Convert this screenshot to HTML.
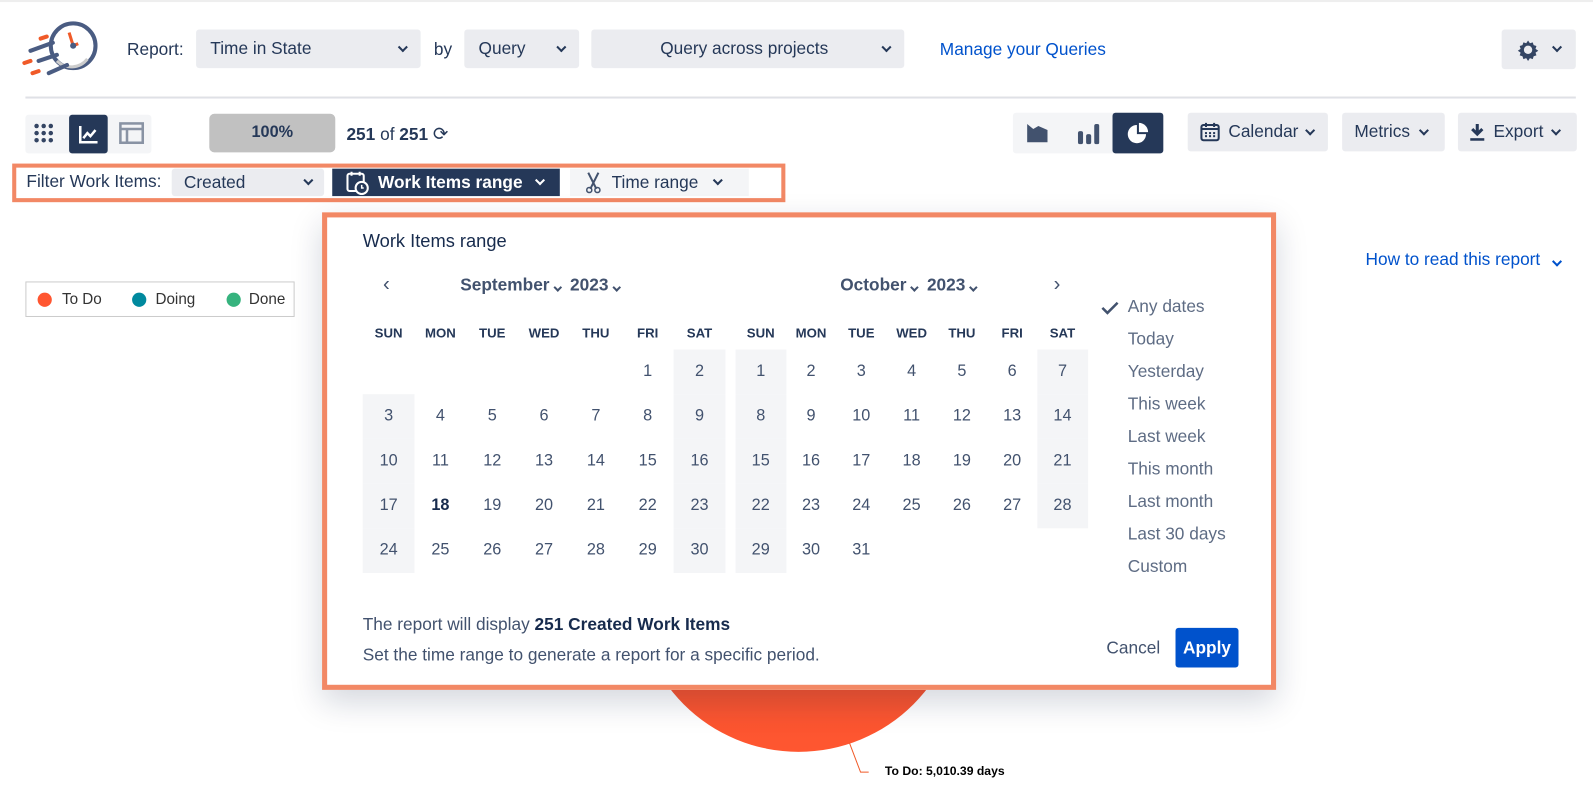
<!DOCTYPE html>
<html><head><meta charset="utf-8"><style>
*{box-sizing:border-box;margin:0;padding:0}
body{width:1593px;height:794px;background:#fff;font-family:"Liberation Sans",Arial,sans-serif;color:#253858;position:relative;overflow:hidden}
#w{position:absolute;left:0;top:0;width:1568px;height:782px;transform:scale(1.016);transform-origin:0 0}
.a{position:absolute}
.sel{position:absolute;background:#ebecf0;border-radius:3px;font-size:17px;color:#253858;display:flex;align-items:center}
.chev{display:inline-block;width:7px;height:7px;border-right:2px solid #253858;border-bottom:2px solid #253858;transform:rotate(45deg);margin-top:-4px}
.grid{position:absolute;display:grid;grid-template-rows:44px 44px 44px 44px 44px;font-size:16px;color:#42526e}
.grid div{display:flex;align-items:center;justify-content:center}
.grid .w{background:#f4f5f7}
.hdr{position:absolute;display:grid;font-size:13px;font-weight:bold;color:#253858}
.hdr div{text-align:center}
.opt{position:absolute;left:1110px;font-size:17px;color:#5e6c84}
</style></head><body><div id="w">
<div class="a" style="left:0;top:0;width:1593px;height:2px;background:#eee"></div>
<svg class="a" style="left:20px;top:16px" width="84" height="64" viewBox="0 0 84 64">
<circle cx="52" cy="29" r="22" fill="none" stroke="#4a5c82" stroke-width="4"/>
<path d="M36 44 A20 20 0 0 0 66 42" fill="none" stroke="#ccc" stroke-width="3"/>
<line x1="52" y1="29" x2="48" y2="16" stroke="#f05a28" stroke-width="3"/>
<line x1="52" y1="29" x2="57" y2="27" stroke="#f05a28" stroke-width="3"/>
<circle cx="52" cy="29" r="3" fill="#4a5c82"/>
<path d="M10 34 L32 26 M18 44 L36 38 M28 56 L46 48" stroke="#4a5c82" stroke-width="4" stroke-linecap="round"/>
<path d="M20 22 L26 20 M4 46 L10 44 M12 56 L18 54" stroke="#f05a28" stroke-width="4" stroke-linecap="round"/>
</svg>
<div class="a" style="left:125px;top:39px;font-size:17px">Report:</div>
<div class="sel" style="left:193px;top:29px;width:221px;height:38px;padding:0 14px;justify-content:space-between"><span>Time in State</span><span class="chev"></span></div>
<div class="a" style="left:427px;top:39px;font-size:17px">by</div>
<div class="sel" style="left:457px;top:29px;width:113px;height:38px;padding:0 14px;justify-content:space-between"><span>Query</span><span class="chev"></span></div>
<div class="sel" style="left:582px;top:29px;width:308px;height:38px;padding:0 14px"><span style="flex:1;text-align:center">Query across projects</span><span class="chev"></span></div>
<div class="a" style="left:925px;top:39px;font-size:17px;color:#0052cc">Manage your Queries</div>
<div class="sel" style="left:1478px;top:29px;width:73px;height:39px;justify-content:center;gap:14px">
<svg width="22" height="22" viewBox="0 0 24 24"><path d="M12 2l2 3 3-1 1 3 3 1-1 3 3 2-3 2 1 3-3 1-1 3-3-1-2 3-2-3-3 1-1-3-3-1 1-3-3-2 3-2-1-3 3-1 1-3 3 1z" fill="#344563"/><circle cx="12" cy="12" r="4.5" fill="#ebecf0"/></svg><span class="chev"></span></div>
<div class="a" style="left:25px;top:95px;width:1526px;height:2px;background:#dfe1e6"></div>
<div class="a" style="left:25px;top:113px;width:124px;height:38px;background:#f4f5f7;border-radius:3px"></div>
<svg class="a" style="left:33px;top:121px" width="20" height="20"><g fill="#344563"><circle cx="3" cy="3" r="2.2"/><circle cx="10" cy="3" r="2.2"/><circle cx="17" cy="3" r="2.2"/><circle cx="3" cy="10" r="2.2"/><circle cx="10" cy="10" r="2.2"/><circle cx="17" cy="10" r="2.2"/><circle cx="3" cy="17" r="2.2"/><circle cx="10" cy="17" r="2.2"/><circle cx="17" cy="17" r="2.2"/></g></svg>
<div class="a" style="left:68px;top:113px;width:38px;height:38px;background:#253858;border-radius:3px"></div>
<svg class="a" style="left:76px;top:121px" width="22" height="22"><path d="M3 3V19H20" stroke="#fff" stroke-width="2.5" fill="none"/><path d="M6 15L10 10 13 13 18 7" stroke="#fff" stroke-width="2.5" fill="none"/></svg>
<svg class="a" style="left:117px;top:120px" width="25" height="22"><rect x="1.5" y="1.5" width="22" height="19" fill="none" stroke="#8993a4" stroke-width="2.5"/><path d="M1.5 7H23.5M8 7V20" stroke="#8993a4" stroke-width="2.5"/></svg>
<div class="a" style="left:206px;top:112px;width:124px;height:38px;background:#c1c1c1;border-radius:5px;font-size:16px;font-weight:bold;text-align:center;line-height:38px">100%</div>
<div class="a" style="left:341px;top:122px;font-size:17px"><b>251</b> of <b>251</b> <span style="font-size:18px">⟳</span></div>
<div class="a" style="left:997px;top:111px;width:147px;height:40px;background:#f4f5f7;border-radius:3px"></div>
<svg class="a" style="left:1009px;top:120px" width="24" height="22"><path d="M2 2L8 7 13 4 22 8V20H2Z" fill="#42526e"/></svg>
<svg class="a" style="left:1060px;top:120px" width="22" height="22"><rect x="1" y="9" width="5" height="13" rx="2" fill="#42526e"/><rect x="9" y="12" width="5" height="10" rx="2" fill="#42526e"/><rect x="17" y="2" width="5" height="20" rx="2" fill="#42526e"/></svg>
<div class="a" style="left:1095px;top:111px;width:50px;height:40px;background:#253858;border-radius:3px"></div>
<svg class="a" style="left:1108px;top:120px" width="24" height="22"><path d="M11 3A9 9 0 1 0 20 12H11Z" fill="#fff"/><path d="M13 1A9 9 0 0 1 22 10H13Z" fill="#fff"/></svg>
<div class="sel" style="left:1169px;top:111px;width:138px;height:38px;padding:0 12px;gap:8px">
<svg width="20" height="20"><rect x="1.5" y="3" width="17" height="15" rx="2" fill="none" stroke="#253858" stroke-width="2"/><path d="M1.5 7H18.5M6 1V5M14 1V5" stroke="#253858" stroke-width="2"/><g fill="#253858"><rect x="5" y="10" width="2" height="2"/><rect x="9" y="10" width="2" height="2"/><rect x="13" y="10" width="2" height="2"/><rect x="5" y="13" width="2" height="2"/><rect x="9" y="13" width="2" height="2"/><rect x="13" y="13" width="2" height="2"/></g></svg><span>Calendar</span><span class="chev"></span></div>
<div class="sel" style="left:1321px;top:111px;width:101px;height:38px;padding:0 12px;gap:10px"><span>Metrics</span><span class="chev"></span></div>
<div class="sel" style="left:1435px;top:111px;width:117px;height:38px;padding:0 12px;gap:9px">
<svg width="14" height="18"><path d="M7 1V11M2 6L7 11 12 6" stroke="#253858" stroke-width="3" fill="none"/><rect x="0" y="15" width="14" height="2.5" fill="#253858"/></svg><span>Export</span><span class="chev"></span></div>
<div class="a" style="left:12px;top:161px;width:761px;height:38px;border:4px solid #f28865;background:#fff"></div>
<div class="a" style="left:26px;top:169px;font-size:17px">Filter Work Items:</div>
<div class="sel" style="left:169px;top:166px;width:150px;height:27px;padding:0 12px;justify-content:space-between"><span>Created</span><span class="chev"></span></div>
<div class="a" style="left:327px;top:166px;width:224px;height:27px;background:#253858;color:#fff;font-size:17px;font-weight:bold;display:flex;align-items:center;padding-left:13px;gap:8px">
<svg width="24" height="24"><rect x="2" y="3" width="16" height="17" rx="2" fill="none" stroke="#fff" stroke-width="2"/><path d="M6 1V5M14 1V5" stroke="#fff" stroke-width="2"/><circle cx="16" cy="17" r="6" fill="#253858" stroke="#fff" stroke-width="2"/><path d="M16 14V17H18" stroke="#fff" stroke-width="1.5" fill="none"/></svg><span>Work Items range</span><span class="chev" style="border-color:#fff;margin-left:6px"></span></div>
<div class="a" style="left:561px;top:166px;width:176px;height:27px;background:#f4f5f7;font-size:17px;display:flex;align-items:center;padding-left:15px;gap:10px">
<svg width="16" height="22"><path d="M3 1L11 17M13 1L5 17" stroke="#42526e" stroke-width="2"/><circle cx="4" cy="18" r="2.5" fill="none" stroke="#42526e" stroke-width="1.5"/><circle cx="12" cy="18" r="2.5" fill="none" stroke="#42526e" stroke-width="1.5"/></svg><span>Time range</span><span class="chev" style="margin-left:6px"></span></div>
<div class="a" style="left:25px;top:277px;width:265px;height:35px;border:1px solid #ccc;font-size:15px;color:#333">
<span class="a" style="left:11px;top:10px;width:14px;height:14px;border-radius:50%;background:#ff5630"></span><span class="a" style="left:35px;top:8px">To Do</span>
<span class="a" style="left:104px;top:10px;width:14px;height:14px;border-radius:50%;background:#00899e"></span><span class="a" style="left:127px;top:8px">Doing</span>
<span class="a" style="left:197px;top:10px;width:14px;height:14px;border-radius:50%;background:#36b37e"></span><span class="a" style="left:219px;top:8px">Done</span></div>
<div class="a" style="left:1344px;top:246px;font-size:17px;color:#0052cc">How to read this report <span class="chev" style="border-color:#0052cc;margin-left:8px"></span></div>
<div class="a" style="left:626px;top:420px;width:320px;height:320px;border-radius:50%;background:linear-gradient(#d94a2c,#ff5630)"></div>
<svg class="a" style="left:835px;top:730px" width="30" height="35"><path d="M1 1L12 30H20" stroke="#f05a28" fill="none"/></svg>
<div class="a" style="left:871px;top:752px;font-size:12px;font-weight:bold;color:#000">To Do: 5,010.39 days</div>
<div class="a" style="left:317px;top:209px;width:939px;height:470px;border:5px solid #f28865;background:#fff;box-shadow:0 12px 30px rgba(9,30,66,.18)"></div>
<div class="a" style="left:357px;top:227px;font-size:18px;color:#172b4d">Work Items range</div>
<div class="a" style="left:377px;top:269px;font-size:20px;color:#42526e">‹</div>
<div class="a" style="left:1037px;top:269px;font-size:20px;color:#42526e">›</div>
<div class="a" style="left:453px;top:271px;font-size:17px;font-weight:bold;color:#42526e">September <span class="chev" style="width:6px;height:6px;border-color:#42526e"></span>&nbsp; 2023 <span class="chev" style="width:6px;height:6px;border-color:#42526e"></span></div>
<div class="a" style="left:827px;top:271px;font-size:17px;font-weight:bold;color:#42526e">October <span class="chev" style="width:6px;height:6px;border-color:#42526e"></span>&nbsp; 2023 <span class="chev" style="width:6px;height:6px;border-color:#42526e"></span></div>
<div class="hdr" style="left:357px;top:320px;grid-template-columns:repeat(7,51px)"><div>SUN</div><div>MON</div><div>TUE</div><div>WED</div><div>THU</div><div>FRI</div><div>SAT</div></div>
<div class="hdr" style="left:724px;top:320px;grid-template-columns:repeat(7,49.5px)"><div>SUN</div><div>MON</div><div>TUE</div><div>WED</div><div>THU</div><div>FRI</div><div>SAT</div></div>
<div class="grid" style="left:357px;top:344px;grid-template-columns:repeat(7,51px)">
<div></div><div></div><div></div><div></div><div></div><div>1</div><div class="w">2</div>
<div class="w">3</div><div>4</div><div>5</div><div>6</div><div>7</div><div>8</div><div class="w">9</div>
<div class="w">10</div><div>11</div><div>12</div><div>13</div><div>14</div><div>15</div><div class="w">16</div>
<div class="w">17</div><div style="font-weight:bold;color:#172b4d">18</div><div>19</div><div>20</div><div>21</div><div>22</div><div class="w">23</div>
<div class="w">24</div><div>25</div><div>26</div><div>27</div><div>28</div><div>29</div><div class="w">30</div>
</div>
<div class="grid" style="left:724px;top:344px;grid-template-columns:repeat(7,49.5px)">
<div class="w">1</div><div>2</div><div>3</div><div>4</div><div>5</div><div>6</div><div class="w">7</div>
<div class="w">8</div><div>9</div><div>10</div><div>11</div><div>12</div><div>13</div><div class="w">14</div>
<div class="w">15</div><div>16</div><div>17</div><div>18</div><div>19</div><div>20</div><div class="w">21</div>
<div class="w">22</div><div>23</div><div>24</div><div>25</div><div>26</div><div>27</div><div class="w">28</div>
<div class="w">29</div><div>30</div><div>31</div><div></div><div></div><div></div><div></div>
</div>
<svg class="a" style="left:1083px;top:295px" width="20" height="16"><path d="M2 8L7 13 17 3" stroke="#42526e" stroke-width="2.5" fill="none"/></svg>
<div class="opt" style="top:292px">Any dates</div>
<div class="opt" style="top:324px">Today</div>
<div class="opt" style="top:356px">Yesterday</div>
<div class="opt" style="top:388px">This week</div>
<div class="opt" style="top:420px">Last week</div>
<div class="opt" style="top:452px">This month</div>
<div class="opt" style="top:484px">Last month</div>
<div class="opt" style="top:516px">Last 30 days</div>
<div class="opt" style="top:548px">Custom</div>
<div class="a" style="left:357px;top:605px;font-size:17px;color:#42526e">The report will display <b style="color:#172b4d">251 Created Work Items</b></div>
<div class="a" style="left:357px;top:635px;font-size:17px;color:#42526e">Set the time range to generate a report for a specific period.</div>
<div class="a" style="left:1089px;top:628px;font-size:17px;color:#42526e">Cancel</div>
<div class="a" style="left:1157px;top:618px;width:62px;height:39px;background:#0052cc;border-radius:3px;color:#fff;font-size:17px;font-weight:bold;text-align:center;line-height:39px">Apply</div>
</div></body></html>
